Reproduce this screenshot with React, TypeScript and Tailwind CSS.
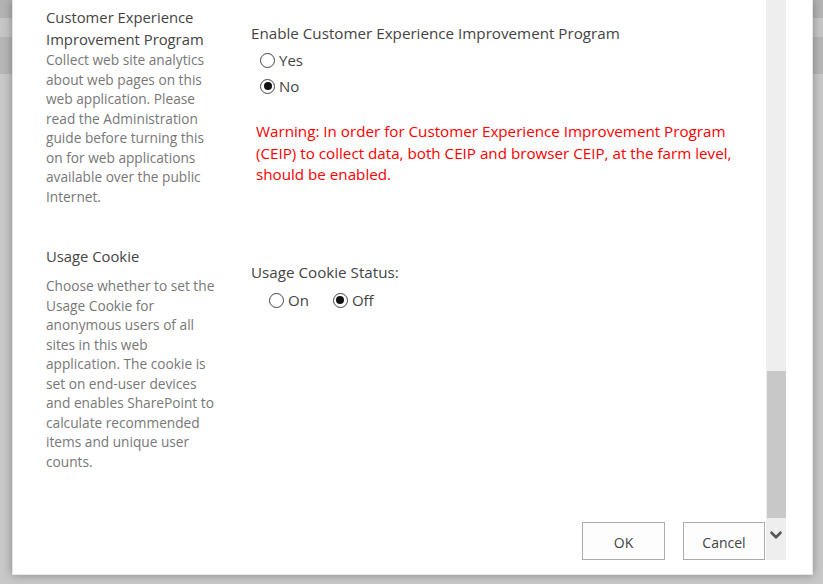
import React from 'react';
import { ChevronDown } from 'lucide-react';

const font = { fontFamily: '"Open Sans", "Noto Sans", sans-serif' };

const Radio: React.FC<{ checked?: boolean; label: string }> = ({ checked = false, label }) => (
  <label className="flex items-center gap-[4px] text-[15px] leading-[20px] text-[#444444]">
    <span className="flex h-[15px] w-[15px] items-center justify-center rounded-full border border-[#444444] bg-white">
      {checked && <span className="h-[8px] w-[8px] rounded-full bg-[#111111]" />}
    </span>
    {label}
  </label>
);

const SectionLabel: React.FC<{ title: React.ReactNode; desc: string; titleClass?: string }> = ({ title, desc, titleClass = '' }) => (
  <div className="w-[178px] shrink-0">
    <div className={`text-[14.8px] leading-[22px] text-[#444444] ${titleClass}`}>{title}</div>
    <p className="text-[13.7px] leading-[19.5px] text-[#777777]">{desc}</p>
  </div>
);

export default function App() {
  return (
    <div
      className="flex h-[584px] w-[823px] bg-[linear-gradient(to_bottom,#b3b3b3_0px,#b3b3b3_18px,#c6c6c6_18px,#c6c6c6_37px,#b6b6b6_37px,#b6b6b6_74px,#c8c8c8_74px)]"
      style={font}
    >
      <div className="ml-[12px] mr-[10px] mb-[9px] flex flex-1 flex-col border-l border-r border-b border-[#e6e6e6] bg-white shadow-[0_0_9px_rgba(0,0,0,0.32)]">
        <div className="flex h-[560px]">
          <div className="flex flex-1 flex-col pl-[33px]">
            {/* CEIP */}
            <div className="mt-[6px] flex gap-[27px]">
              <SectionLabel
                title={<>Customer Experience<br />Improvement Program</>}
                desc="Collect web site analytics about web pages on this web application. Please read the Administration guide before turning this on for web applications available over the public Internet."
              />
              <div className="pt-[16px]">
                <div className="text-[15.2px] leading-[22px] text-[#444444]">Enable Customer Experience Improvement Program</div>
                <div className="mt-[6px] flex flex-col gap-[6px] pl-[9px]">
                  <Radio label="Yes" />
                  <Radio label="No" checked />
                </div>
                <p className="mt-[25px] w-[500px] pl-[5px] text-[15.2px] leading-[21.5px] text-[#ff0000]">
                  Warning: In order for Customer Experience Improvement Program (CEIP) to collect data, both CEIP and browser CEIP, at the farm level, should be enabled.
                </p>
              </div>
            </div>

            {/* Usage cookie */}
            <div className="mt-[39px] flex gap-[27px]">
              <SectionLabel
                title="Usage Cookie"
                desc="Choose whether to set the Usage Cookie for anonymous users of all sites in this web application. The cookie is set on end-user devices and enables SharePoint to calculate recommended items and unique user counts."
                titleClass="mb-[9px]"
              />
              <div className="pt-[16px]">
                <div className="text-[15.2px] leading-[22px] text-[#444444]">Usage Cookie Status:</div>
                <div className="mt-[7px] flex gap-[24px] pl-[18px]">
                  <Radio label="On" />
                  <Radio label="Off" checked />
                </div>
              </div>
            </div>

            <div className="mt-auto flex justify-end gap-[18px] pr-[1px]">
              <button className="h-[38px] w-[83px] border border-[#ababab] bg-[#fdfdfd] pt-[3px] text-[14px] text-[#444444]">OK</button>
              <button className="h-[38px] w-[82px] border border-[#ababab] bg-[#fdfdfd] pt-[3px] text-[14px] text-[#444444]">Cancel</button>
            </div>
          </div>

          <div className="flex w-[20px] flex-col bg-[#eeeeee]">
            <div className="h-[371px]" />
            <div className="ml-[1px] h-[147px] bg-[#c8c8c8]" />
            <div className="flex h-[30px] items-center justify-center pt-[3px]">
              <ChevronDown className="h-[18px] w-[18px] text-[#555555]" strokeWidth={3.5} />
            </div>
          </div>
          <div className="w-[26px]" />
        </div>
      </div>
    </div>
  );
}
